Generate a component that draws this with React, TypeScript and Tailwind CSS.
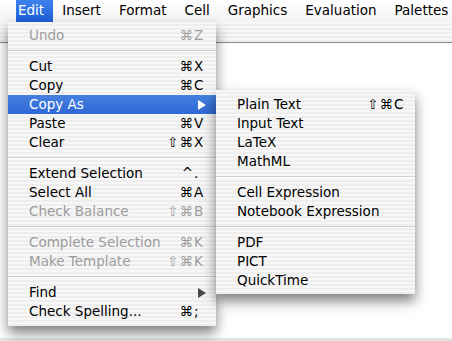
import React from "react";

type Item =
  | { sep: true }
  | { label: string; mods?: string; key?: string; disabled?: boolean; arrow?: boolean; active?: boolean };

const editItems: Item[] = [
  { label: "Undo", mods: "⌘", key: "Z", disabled: true },
  { sep: true },
  { label: "Cut", mods: "⌘", key: "X" },
  { label: "Copy", mods: "⌘", key: "C" },
  { label: "Copy As", arrow: true, active: true },
  { label: "Paste", mods: "⌘", key: "V" },
  { label: "Clear", mods: "⇧⌘", key: "X" },
  { sep: true },
  { label: "Extend Selection", mods: "^", key: "." },
  { label: "Select All", mods: "⌘", key: "A" },
  { label: "Check Balance", mods: "⇧⌘", key: "B", disabled: true },
  { sep: true },
  { label: "Complete Selection", mods: "⌘", key: "K", disabled: true },
  { label: "Make Template", mods: "⇧⌘", key: "K", disabled: true },
  { sep: true },
  { label: "Find", arrow: true },
  { label: "Check Spelling...", mods: "⌘", key: ";" },
];

const subItems: Item[] = [
  { label: "Plain Text", mods: "⇧⌘", key: "C" },
  { label: "Input Text" },
  { label: "LaTeX" },
  { label: "MathML" },
  { sep: true },
  { label: "Cell Expression" },
  { label: "Notebook Expression" },
  { sep: true },
  { label: "PDF" },
  { label: "PICT" },
  { label: "QuickTime" },
];

const stripe =
  "bg-[repeating-linear-gradient(0deg,#eeeeee_0px,#eeeeee_2px,#f7f7f7_2px,#f7f7f7_4px)]";

function Arrow({ color }: { color: string }) {
  return (
    <svg width="8" height="10" viewBox="0 0 8 10" className="block">
      <polygon points="0,0 8,5 0,10" fill={color} />
    </svg>
  );
}

function MenuRows({ items, pl, pr }: { items: Item[]; pl: string; pr: string }) {
  return (
    <>
      {items.map((it, i) => {
        if ("sep" in it) {
          return (
            <div key={i} className="h-[12px] flex flex-col justify-center">
              <div className="h-px bg-[#d2d2d2]" />
              <div className="h-px bg-[#fbfbfb]" />
            </div>
          );
        }
        const color = it.active ? "text-white" : it.disabled ? "text-[#9c9c9c]" : "text-black";
        return (
          <div
            key={i}
            className={`h-[19px] flex items-center ${pl} ${pr} ${color} ${
              it.active ? "bg-[linear-gradient(#4580e0,#2f68d4)]" : ""
            }`}
          >
            <span className="flex-1 whitespace-nowrap">{it.label}</span>
            {it.arrow ? (
              <span className="mr-[-2px]">
                <Arrow color={it.active ? "#ffffff" : "#4a4a4a"} />
              </span>
            ) : it.key ? (
              <span className="flex items-center whitespace-nowrap">
                <span className="text-right tracking-[1px]">{it.mods}</span>
                <span className="w-[10px] text-left">{it.key}</span>
              </span>
            ) : null}
          </div>
        );
      })}
    </>
  );
}

export default function App() {
  const titles = ["Insert", "Format", "Cell", "Graphics", "Evaluation", "Palettes"];
  return (
    <div
      className="relative w-[452px] h-[341px] overflow-hidden bg-white text-[13.5px] leading-none"
      style={{ fontFamily: '"DejaVu Sans", "Liberation Sans", sans-serif' }}
    >
      {/* Menu bar */}
      <div className="h-[22px] flex items-stretch pl-[16px] bg-[linear-gradient(#ffffff,#f3f3f3)]">
        <div className="flex items-center pl-[2px] pr-[9px] text-white bg-[linear-gradient(#3e82ec,#1e5ed8)]">
          Edit
        </div>
        {titles.map((t) => (
          <div key={t} className="flex items-center px-[9px] text-black">
            {t}
          </div>
        ))}
      </div>

      {/* Window behind */}
      <div className="flex flex-col h-[319px]">
        <div className={`h-[21px] ${stripe} border-b border-[#8a8a8a]`} />
        <div className="flex-1 bg-white" />
        <div className="h-[3px] bg-[#e4e4e4]" />
      </div>

      {/* Edit menu */}
      <div
        className={`absolute left-[8px] top-[22px] w-[208px] pt-[4px] pb-[5px] ${stripe} shadow-[0_7px_12px_rgba(0,0,0,0.5)]`}
      >
        <MenuRows items={editItems} pl="pl-[21px]" pr="pr-[12px]" />
      </div>

      {/* Submenu */}
      <div
        className={`absolute left-[216px] top-[90px] w-[199px] pt-[5px] pb-[4px] ${stripe} shadow-[0_7px_12px_rgba(0,0,0,0.5)]`}
      >
        <MenuRows items={subItems} pl="pl-[21px]" pr="pr-[11px]" />
      </div>
    </div>
  );
}
